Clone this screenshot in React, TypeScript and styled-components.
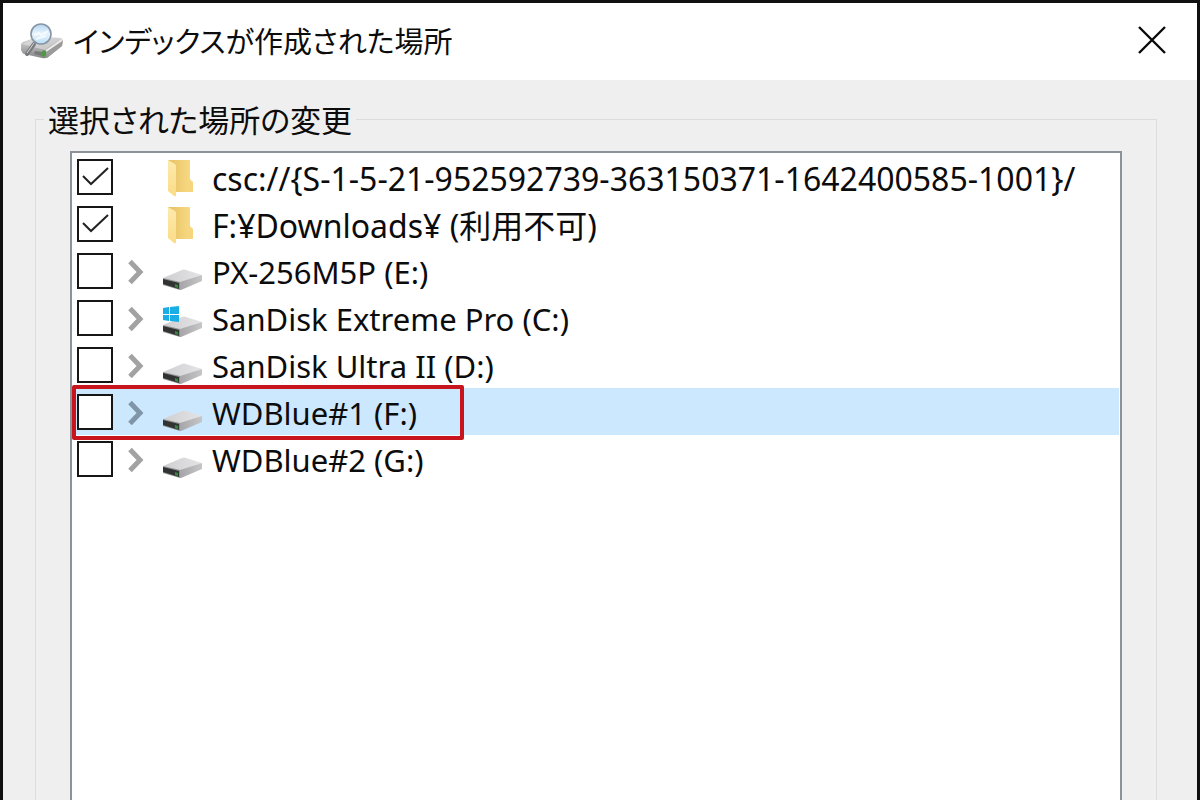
import React, { useState } from "react";
import styled, { createGlobalStyle } from "styled-components";

const GlobalStyle = createGlobalStyle`
  *, *::before, *::after { box-sizing: border-box; }
  body {
    margin: 0;
    background: #efefef;
    color: #0c0c0c;
    font-family: "Noto Sans", "Noto Sans CJK JP", sans-serif;
    font-size: 31px;
    overflow: hidden;
  }
`;

const Window = styled.div`
  display: flex;
  flex-direction: column;
  height: 100vh;
  border: 3px solid #101010;
  border-bottom: 0;
  background: #efefef;
`;

const TitleBar = styled.header`
  display: flex;
  align-items: center;
  gap: 8px;
  height: 77px;
  flex: none;
  padding: 0 30px 0 17px;
  background: #fff;
`;

const Title = styled.h1`
  flex: 1;
  margin: 0;
  padding-bottom: 4px;
  font-family: "Noto Sans CJK JP", sans-serif;
  font-size: 29px;
  font-weight: 400;
  line-height: 40px;
  font-feature-settings: "palt";
  white-space: nowrap;
`;

const CloseButton = styled.button`
  display: grid;
  place-items: center;
  width: 30px;
  height: 30px;
  margin-bottom: 3px;
  padding: 0;
  border: 0;
  background: none;
`;

const Content = styled.main`
  display: flex;
  flex: 1;
  min-height: 0;
  padding: 20px 40px 0 32px;
`;

const Group = styled.fieldset`
  display: flex;
  flex: 1;
  min-width: 0;
  margin: 0;
  padding: 13px 34px 0;
  border: 1px solid #dcdcdc;
  border-bottom: 0;
`;

const GroupTitle = styled.legend`
  margin-left: -26px;
  padding: 0 4px;
  font-family: "Noto Sans CJK JP", sans-serif;
  font-size: 31px;
  line-height: 38px;
  font-feature-settings: "palt";
`;

const Tree = styled.ul`
  flex: 1;
  margin: 0;
  padding: 0 1px;
  border: 2px solid #8d9299;
  border-bottom: 0;
  background: #fff;
  list-style: none;
`;

const Row = styled.li<{ $selected?: boolean }>`
  position: relative;
  display: grid;
  grid-template-columns: 36px 46px 44px 1fr;
  align-items: center;
  height: 47px;
  padding-left: 4px;
  background: ${(p) => (p.$selected ? "#cce8ff" : "transparent")};
`;

const Check = styled.span`
  position: relative;
  width: 36px;
  height: 36px;
  svg {
    position: absolute;
    inset: 0;
    pointer-events: none;
  }
`;

const CheckInput = styled.input`
  appearance: none;
  display: block;
  width: 36px;
  height: 36px;
  margin: 0;
  border: 2px solid #161616;
  background: #fff;
`;

const Expander = styled.button`
  justify-self: center;
  display: grid;
  place-items: center;
  width: 24px;
  height: 32px;
  padding: 0;
  border: 0;
  background: none;
`;

const IconCell = styled.span<{ $inset: number }>`
  grid-column: 3;
  display: grid;
  place-items: center start;
  padding-left: ${(p) => p.$inset}px;
`;

const Name = styled.label<{ $path: boolean }>`
  padding: 4px 0 0 9px;
  font-size: ${(p) => (p.$path ? 32 : 31)}px;
  line-height: 43px;
  white-space: nowrap;
`;

const Highlight = styled.span`
  position: absolute;
  top: -3px;
  left: -1px;
  width: 392px;
  height: 55px;
  border: 4px solid #c8141c;
  border-radius: 2px;
  pointer-events: none;
`;

const SearchDriveIcon = () => (
  <svg width="45" height="38" viewBox="0 0 45 38" aria-hidden="true">
    <defs>
      <linearGradient id="sdTop" x1="0" y1="0" x2="1" y2="1">
        <stop offset="0" stopColor="#dedede" />
        <stop offset="1" stopColor="#c2c2c2" />
      </linearGradient>
      <linearGradient id="sdSide" x1="0" y1="0" x2="0" y2="1">
        <stop offset="0" stopColor="#dadada" />
        <stop offset="1" stopColor="#858585" />
      </linearGradient>
      <linearGradient id="lens" x1="0" y1="0" x2="0" y2="1">
        <stop offset="0" stopColor="#b4d5f3" />
        <stop offset="0.5" stopColor="#e9f4fc" />
        <stop offset="1" stopColor="#b9ddf7" />
      </linearGradient>
    </defs>
    <path d="M1 22 Q1 20 3 19 L17 14 L41 15 Q43 16 43 18 L42 23 L28 34 Q25 36 22 35 L4 31 Q2 30 1 27Z" fill="url(#sdSide)" />
    <path d="M2 21 L17 14 L41 15 L25 27Z" fill="url(#sdTop)" />
    <path d="M26 28 L43 17 L42 23 L27 35Z" fill="#9a9a9a" />
    <path d="M26 28 L42 17" stroke="#ececec" strokeWidth="2" />
    <path d="M15 28 L22 29 L22 33 L14 31Z" fill="#77797b" />
    <path d="M22 28 Q26 26 26 29 V32 Q25 35 22 33Z" fill="#4c9a42" />
    <path d="M14 21 L7 31" stroke="#777b80" strokeWidth="4" strokeLinecap="round" />
    <path d="M14 20 L7 30" stroke="#d3d6d9" strokeWidth="1" />
    <circle cx="21" cy="11" r="10" fill="url(#lens)" stroke="#8795a4" strokeWidth="1.6" />
    <path d="M14 12 L19 10 L21 12 L28 8 M16 16 L26 13" stroke="#fff" strokeWidth="2" fill="none" opacity="0.7" />
  </svg>
);

const FolderIcon = () => (
  <svg width="28" height="40" viewBox="0 0 28 40" aria-hidden="true">
    <defs>
      <linearGradient id="folderBack" x1="0" y1="0" x2="1" y2="0">
        <stop offset="0" stopColor="#e6c062" />
        <stop offset="1" stopColor="#fadd88" />
      </linearGradient>
      <linearGradient id="folderFront" x1="0" y1="0" x2="0" y2="1">
        <stop offset="0" stopColor="#fdeaae" />
        <stop offset="1" stopColor="#fbdc86" />
      </linearGradient>
    </defs>
    <path d="M1 3 H22 Q23 3 23 4 V22 L26 25 V34 Q26 35 25 35 H8Z" fill="url(#folderBack)" />
    <path d="M22 23 L26 25 V34 Q26 35 25 35 H22Z" fill="#f6d57c" />
    <path d="M1 3 L8 7 Q9 8 9 9 V38 Q9 40 7 39 L1 34Z" fill="url(#folderFront)" />
  </svg>
);

const DriveIcon = ({ windows }: { windows?: boolean }) => (
  <svg width="42" height="40" viewBox="0 0 42 40" aria-hidden="true">
    <defs>
      <linearGradient id="driveTop" x1="0" y1="0" x2="1" y2="0">
        <stop offset="0" stopColor="#cfcfd1" />
        <stop offset="1" stopColor="#e4e4e6" />
      </linearGradient>
      <linearGradient id="driveSide" x1="0" y1="0" x2="1" y2="0">
        <stop offset="0" stopColor="#a6a6a8" />
        <stop offset="1" stopColor="#c6c6c8" />
      </linearGradient>
    </defs>
    <path d="M1 27 L20 19 Q22 18 24 19 L40 24 L18 32Z" fill="url(#driveTop)" />
    <path d="M18 31 L40 24 V30 L19 39 L18 39Z" fill="url(#driveSide)" />
    <path d="M1 27 L18 31 V39 L1 34Z" fill="#8f9092" />
    <path d="M1 28 L17 32 V38 L1 33Z" fill="#303332" />
    <path d="M13 33 L16 34 V37 L13 36Z" fill="#2f8a3b" />
    {windows && (
      <g fill="#19aee5">
        <path d="M1 10 L7 9 V16 H1Z" />
        <path d="M8 9 L17 8 V16 H8Z" />
        <path d="M1 17 H7 V23 L1 22Z" />
        <path d="M8 17 H17 V24 L8 23Z" />
      </g>
    )}
  </svg>
);

type Kind = "folder" | "drive" | "system";

interface Place {
  id: string;
  name: string;
  kind: Kind;
  indexed: boolean;
  selected?: boolean;
}

const places: Place[] = [
  { id: "csc", name: "csc://{S-1-5-21-952592739-363150371-1642400585-1001}/", kind: "folder", indexed: true },
  { id: "downloads", name: "F:¥Downloads¥ (利用不可)", kind: "folder", indexed: true },
  { id: "e", name: "PX-256M5P (E:)", kind: "drive", indexed: false },
  { id: "c", name: "SanDisk Extreme Pro (C:)", kind: "system", indexed: false },
  { id: "d", name: "SanDisk Ultra II (D:)", kind: "drive", indexed: false },
  { id: "f", name: "WDBlue#1 (F:)", kind: "drive", indexed: false, selected: true },
  { id: "g", name: "WDBlue#2 (G:)", kind: "drive", indexed: false },
];

const PlaceRow = ({ place }: { place: Place }) => {
  const [checked, setChecked] = useState(place.indexed);
  const isFolder = place.kind === "folder";
  return (
    <Row $selected={place.selected}>
      <Check>
        <CheckInput
          type="checkbox"
          id={place.id}
          checked={checked}
          onChange={(e) => setChecked(e.target.checked)}
        />
        {checked && (
          <svg width="36" height="36" viewBox="0 0 36 36" aria-hidden="true">
            <path d="M6 17 L14 25 L31 9" fill="none" stroke="#222" strokeWidth="2" />
          </svg>
        )}
      </Check>
      {!isFolder && (
        <Expander type="button" aria-label={`${place.name} を展開`}>
          <svg width="18" height="26" viewBox="0 0 18 26" aria-hidden="true">
            <path
              d="M3 3.5 L13 14 L3 24.5"
              fill="none"
              stroke={place.selected ? "#8096a8" : "#a2a2a2"}
              strokeWidth="5"
            />
          </svg>
        </Expander>
      )}
      <IconCell $inset={isFolder ? 8 : 3}>
        {isFolder ? <FolderIcon /> : <DriveIcon windows={place.kind === "system"} />}
      </IconCell>
      <Name htmlFor={place.id} $path={isFolder}>
        {place.name}
      </Name>
      {place.selected && <Highlight />}
    </Row>
  );
};

export default function App() {
  return (
    <>
      <GlobalStyle />
      <Window>
        <TitleBar>
          <SearchDriveIcon />
          <Title>インデックスが作成された場所</Title>
          <CloseButton type="button" aria-label="閉じる">
            <svg width="30" height="30" viewBox="0 0 30 30" aria-hidden="true">
              <path d="M2 2 L28 28 M28 2 L2 28" stroke="#0a0a0a" strokeWidth="2.4" />
            </svg>
          </CloseButton>
        </TitleBar>
        <Content>
          <Group>
            <GroupTitle>選択された場所の変更</GroupTitle>
            <Tree>
              {places.map((place) => (
                <PlaceRow key={place.id} place={place} />
              ))}
            </Tree>
          </Group>
        </Content>
      </Window>
    </>
  );
}
